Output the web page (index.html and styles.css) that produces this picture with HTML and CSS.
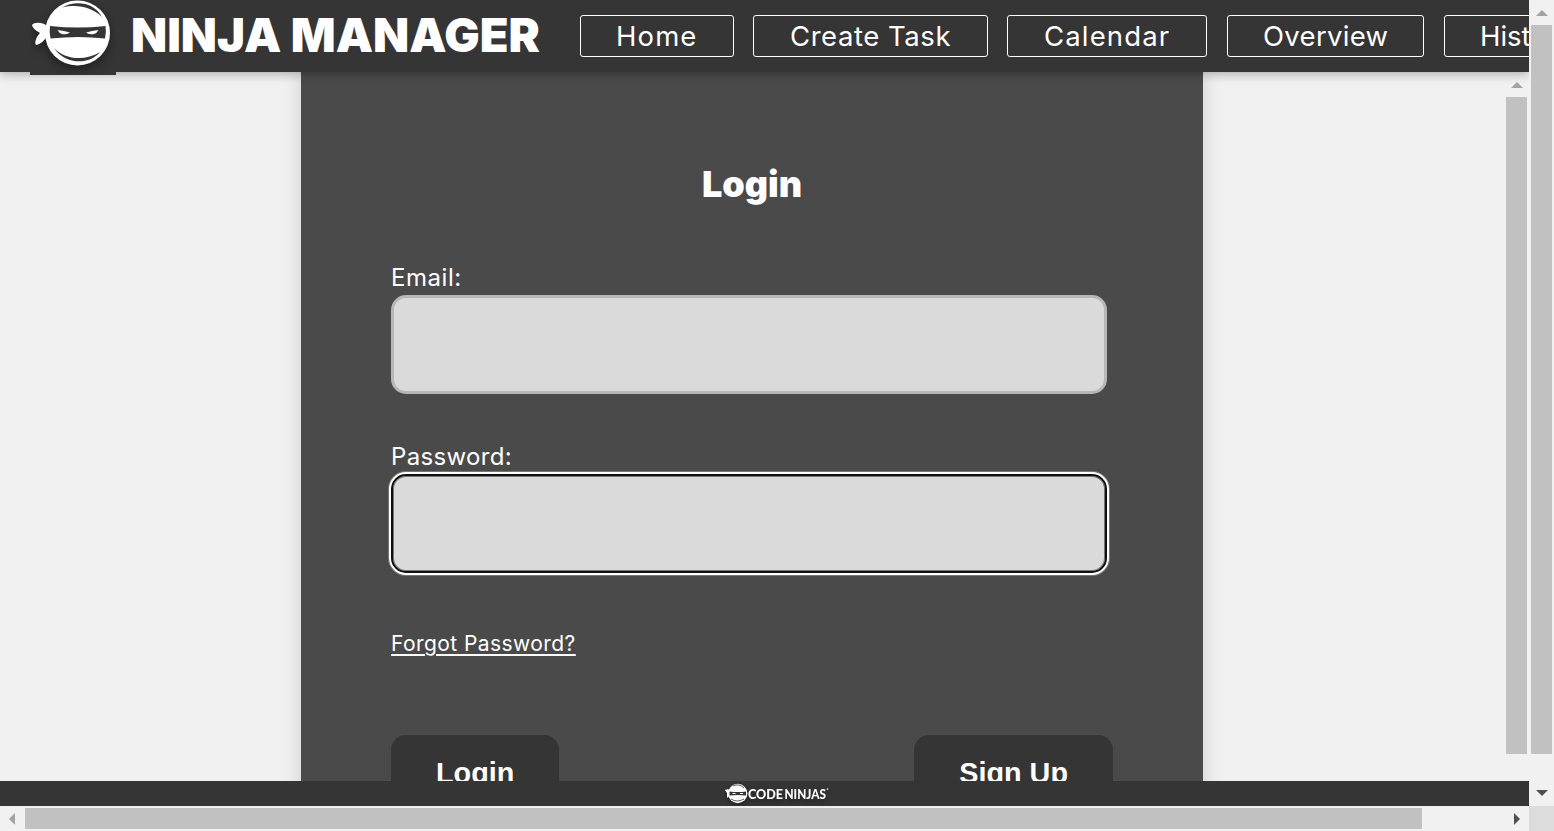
FILE: index.html
```html
<!DOCTYPE html>
<html lang="en">
<head>
<meta charset="utf-8">
<title>Ninja Manager</title>
<link rel="stylesheet" href="styles.css">
</head>
<body>
<div class="window">
  <div class="page">
    <header class="header">
      <div class="logo">
        <svg class="logo-mark" width="86" height="75" viewBox="0 0 86 75">
          <g class="logo-shape">
            <path fill="#fff" d="M2 25C4 22 13 22 17 26L18 30L17 36C15 40 11 44 6 45C4 42 7 36 10 33C7 31 3 29 2 25Z"/>
            <circle cx="47.500" cy="33" r="32.500" fill="#fff"/>
            <g fill="#353535">
              <path d="M32 7.500C45 0 64 2 72 17C61 7 48 4 32 7.500Z"/>
              <path d="M24 48C34 59 54 62 70 52C59 66 34 64 24 48Z"/>
              <path d="M20 26Q48 29 75.500 26Q76.500 32 75 38.500Q48 35.500 20.500 38.500Q19 32 20 26Z"/>
            </g>
            <path fill="#fff" d="M27.500 30Q34 30.500 40 32.500Q37 35 32 34Q29 33 27.500 30ZM68.500 30Q62 30.500 56 32.500Q59 35 64 34Q67 33 68.500 30Z"/>
          </g>
        </svg>
      </div>
      <div class="brand">NINJA MANAGER</div>
      <nav class="nav">
        <a class="nav-link home">Home</a>
        <a class="nav-link create">Create Task</a>
        <a class="nav-link calendar">Calendar</a>
        <a class="nav-link overview">Overview</a>
        <a class="nav-link history">History</a>
      </nav>
    </header>
    <main class="main">
      <form class="card">
        <h1 class="title"><span>Login</span></h1>
        <div class="field">
          <label class="label email" for="email">Email:</label>
          <input class="input" id="email" type="email">
        </div>
        <div class="field">
          <label class="label password" for="password">Password:</label>
          <input class="input focused" id="password" type="password">
        </div>
        <a class="forgot">Forgot Password?</a>
        <div class="actions">
          <button class="button" type="button">Login</button>
          <button class="button" type="button">Sign Up</button>
        </div>
      </form>
      <div class="scroll-y inner">
        <svg class="arrow" width="12" height="6"><path d="M0 6L6 0L12 6Z" fill="#a3a3a3"/></svg>
        <div class="thumb"></div>
      </div>
    </main>
    <footer class="footer">
      <svg class="foot-logo" width="108" height="23" viewBox="0 0 108 23">
        <path fill="#fff" d="M1 8Q4 6 7 9L6 13L3 16L3 11Z"/>
        <circle cx="13.700" cy="11.500" r="9.700" fill="#fff"/>
        <path fill="#353535" d="M5.500 9.500Q14 10.500 22 9.500V13.500Q14 12.500 5.500 13.500Z"/>
        <path fill="none" stroke="#353535" stroke-width=".8" d="M9 4Q15 1 20 6M7 17Q13 21 20 17"/>
        <path stroke="#fff" stroke-width="1.200" d="M8.500 11.500h3M16 11.500h3"/>
        <text class="foot-text" x="24" y="16.500" textLength="35" lengthAdjust="spacingAndGlyphs">CODE</text>
        <text class="foot-text" x="60.500" y="16.500" textLength="41.500" lengthAdjust="spacingAndGlyphs">NINJAS</text>
        <circle cx="103.500" cy="7" r="1" fill="#bbb"/>
      </svg>
    </footer>
  </div>
  <div class="scroll-y outer">
    <svg class="arrow" width="12" height="6"><path d="M0 6L6 0L12 6Z" fill="#a3a3a3"/></svg>
    <div class="thumb"></div>
    <svg class="arrow down" width="12" height="6"><path d="M0 0L6 6L12 0Z" fill="#505050"/></svg>
  </div>
  <div class="scroll-x">
    <svg width="6" height="12"><path d="M6 0L0 6L6 12Z" fill="#a3a3a3"/></svg>
    <div class="thumb-x"></div>
    <svg class="right" width="6" height="12"><path d="M0 0L6 6L0 12Z" fill="#505050"/></svg>
  </div>
  <div class="corner"></div>
</div>
</body>
</html>
```
FILE: styles.css
```css
* { box-sizing: border-box; }
body {
  margin: 0;
  overflow: hidden;
  background: #f1f1f1;
  color: #fff;
  font-family: Inter, "Open Sans", sans-serif;
}
.window {
  display: grid;
  grid-template: 806px 25px / 1529px 25px;
  width: 1554px;
  height: 831px;
}
.page {
  display: flex;
  flex-direction: column;
  overflow: hidden;
}
.header {
  position: relative;
  z-index: 2;
  display: flex;
  flex: none;
  height: 72px;
  padding-left: 30px;
  background: #353535;
  box-shadow: 0 2px 10px rgba(0, 0, 0, .3);
}
.logo { width: 86px; height: 75px; flex: none; background: #353535; }
.logo-mark { display: block; }
.logo-shape { filter: drop-shadow(0 4px 5px rgba(0, 0, 0, .4)); }
.brand {
  flex: 0 0 464px;
  padding-left: 15px;
  font-size: 47px;
  font-weight: 900;
  line-height: 70px;
  letter-spacing: 0;
  white-space: nowrap;
}
.nav { display: flex; padding-top: 15px; }
.nav-link {
  flex: none;
  height: 42px;
  margin-right: 19px;
  padding-left: 35px;
  border: 1px solid #fff;
  border-radius: 3px;
  font-size: 27.5px;
  line-height: 40px;
  white-space: nowrap;
}
.home { width: 154px; letter-spacing: 1.1px; }
.create { width: 235px; padding-left: 36px; letter-spacing: .55px; }
.calendar { width: 200px; margin-right: 20px; padding-left: 36px; letter-spacing: 1.15px; }
.overview { width: 197px; margin-right: 20px; letter-spacing: .3px; }
.history { width: 170px; }
.main {
  display: flex;
  height: 709px;
  overflow: hidden;
}
.card {
  flex: none;
  width: 902px;
  height: 900px;
  margin-left: 301px;
  padding: 86px 90px 0;
  background: #4a4a4a;
  box-shadow: 0 0 20px rgba(0, 0, 0, .15);
}
.title {
  margin: 0;
  height: 104px;
  font-size: 36px;
  font-weight: 900;
  line-height: 53px;
  text-align: center;
}
.field { height: 179px; }
.label {
  display: block;
  height: 33px;
  font-size: 24px;
  line-height: 32px;
}
.email { letter-spacing: .55px; }
.password { letter-spacing: .35px; }
.input {
  display: block;
  width: 716px;
  height: 99px;
  padding: 0 20px;
  border: 3px solid #b7b7b7;
  border-radius: 15px;
  background: #dadada;
  outline: none;
}
.focused {
  border: 2px solid #101010;
  box-shadow: inset 0 0 0 1px #777, 0 0 0 2px #fff, 0 0 0 3px #777;
}
.forgot {
  display: block;
  width: max-content;
  height: 115px;
  padding-top: 8px;
  font-size: 21px;
  line-height: 32px;
  letter-spacing: .43px;
  text-decoration: underline;
  text-decoration-thickness: 2px;
  text-underline-offset: 3px;
}
.actions {
  display: flex;
  justify-content: space-between;
}
.button {
  padding: 22px 45px;
  border: 0;
  border-radius: 15px;
  background: #353535;
  color: #fff;
  font: bold 28.8px "Liberation Sans", Arial, sans-serif;
}
.scroll-y {
  display: flex;
  flex-direction: column;
  align-items: center;
}
.scroll-y .arrow { flex: none; margin: 10px 0 9px; }
.inner { width: 25px; margin-left: 301px; }
.thumb { width: 21px; height: 657px; background: #c1c1c1; }
.outer { background: #f1f1f1; }
.outer .thumb { height: 729px; }
.scroll-y .down { margin: 36px 0 0; }
.footer {
  position: relative;
  flex: 0 0 25px;
  padding: 1px 0 0 724px;
  background: #353535;
}
.foot-logo { display: block; filter: drop-shadow(0 2px 2px rgba(0, 0, 0, .4)); }
.foot-text { fill: #fff; font: 900 14px Lato, sans-serif; }
.scroll-x {
  display: flex;
  align-items: center;
  padding-left: 9px;
  background: #f1f1f1;
}
.thumb-x { width: 1397px; height: 21px; margin: 0 92px 0 10px; background: #c1c1c1; }
.corner { background: #dcdcdc; }
```
